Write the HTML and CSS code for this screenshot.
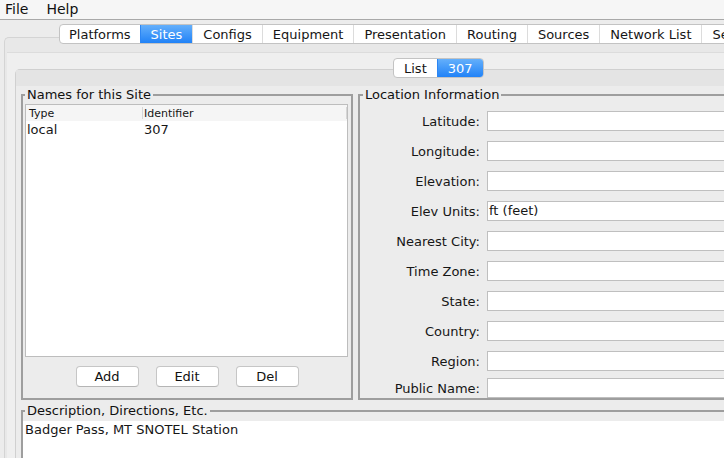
FILE: index.html
```html
<!DOCTYPE html>
<html>
<head>
<meta charset="utf-8">
<link rel="stylesheet" href="styles.css">
</head>
<body>
<div class="menubar"><span>File</span><span>Help</span></div>
<div class="window">
  <div class="tabs">
    <span class="tab">Platforms</span>
    <span class="tab sel">Sites</span>
    <span class="tab">Configs</span>
    <span class="tab">Equipment</span>
    <span class="tab">Presentation</span>
    <span class="tab">Routing</span>
    <span class="tab">Sources</span>
    <span class="tab">Network List</span>
    <span class="tab">Security</span>
  </div>
  <div class="pane">
    <div class="pane-body">
      <div class="subtabs"><span class="tab">List</span><span class="tab sel">307</span></div>
      <div class="subpane">
        <div class="band"></div>
        <div class="groups">
          <fieldset class="group names">
            <legend>Names for this Site</legend>
            <div class="list">
              <div class="list-head"><span class="h1">Type</span><span class="h2">Identifier</span></div>
              <div class="row"><span class="c1">local</span><span class="c2">307</span></div>
            </div>
            <div class="buttons">
              <button class="btn">Add</button>
              <button class="btn">Edit</button>
              <button class="btn">Del</button>
            </div>
          </fieldset>
          <fieldset class="group loc">
            <legend>Location Information</legend>
            <div class="loc-grid">
              <label>Latitude:</label><div class="field"></div>
              <label>Longitude:</label><div class="field"></div>
              <label>Elevation:</label><div class="field"></div>
              <label>Elev Units:</label><div class="field">ft (feet)</div>
              <label>Nearest City:</label><div class="field"></div>
              <label>Time Zone:</label><div class="field"></div>
              <label>State:</label><div class="field"></div>
              <label>Country:</label><div class="field"></div>
              <label>Region:</label><div class="field"></div>
              <label class="tight">Public Name:</label><div class="field tight"></div>
            </div>
          </fieldset>
        </div>
        <fieldset class="group desc">
          <legend>Description, Directions, Etc.</legend>
          <div class="desc-text">Badger Pass, MT SNOTEL Station</div>
        </fieldset>
      </div>
    </div>
  </div>
</div>
</body>
</html>
```

FILE: styles.css
```css
* { box-sizing: border-box; }
html, body { margin: 0; padding: 0; overflow: hidden; }
body {
  width: 724px;
  height: 458px;
  background: #ececec;
  font-family: "DejaVu Sans", "Liberation Sans", sans-serif;
  font-size: 13px;
  color: #161616;
}
.menubar {
  height: 20px;
  background: #f6f6f6;
  border-bottom: 1px solid #a9a9a9;
  display: flex;
  gap: 18px;
  padding-left: 5px;
  font-size: 14px;
  line-height: 19px;
  color: #111;
}
.window {
  width: 900px;
  padding-top: 4px;
}
.tabs, .subtabs {
  display: flex;
  width: max-content;
  height: 20px;
  border: 1px solid #c3c3c3;
  border-radius: 4px;
  background: #fff;
  line-height: 19px;
  position: relative;
  z-index: 1;
  overflow: hidden;
}
.tabs { margin-left: 59px; }
.tab {
  padding: 0 10px;
  border-left: 1px solid #dcdcdc;
  white-space: nowrap;
}
.tabs .tab:first-child { padding: 0 9px; }
.tab:first-child { border-left: none; }
.tab.sel {
  background: linear-gradient(#64affb, #2182f7);
  color: #fff;
  border-left-color: #2d86f3;
}
.pane {
  margin-left: 4px;
  margin-top: -7px;
  border: 1px solid #d4d4d4;
  border-right: none;
  border-radius: 5px 0 0 0;
  background: #e8e8e8;
  padding: 14px 0 0 2px;
}
.pane-body {
  border-top: 1px solid #dcdcdc;
  background: #efefef;
  padding-top: 5px;
}
.subtabs { margin-left: 386px; }
.subpane {
  margin-left: 8px;
  margin-top: -9px;
  border: 1px solid #d0d0d0;
  border-right: none;
  border-radius: 5px 0 0 0;
  background: #ececec;
}
.band {
  height: 16px;
  background: #e4e4e4;
}
.groups {
  display: flex;
  gap: 5px;
  padding-left: 5px;
  margin-top: 1px;
}
.group {
  margin: 0;
  padding: 0;
  min-width: 0;
  border: 2px solid #9e9e9e;
}
.group legend {
  margin-left: 2px;
  padding: 0 2px;
  font-size: 13px;
  line-height: 15px;
  color: #111;
}
.names { width: 332px; flex: none; }
.loc { flex: 1; }
.loc legend { margin-left: 3px; }
.list {
  margin: 2px 3px 0 2px;
  height: 253px;
  border: 1px solid #bdbdbd;
  background: #fff;
}
.list-head {
  display: flex;
  height: 16px;
  background: #f5f5f5;
  font-size: 11px;
  line-height: 16px;
}
.h1 {
  width: 117px;
  padding-left: 3px;
  border-right: 1px solid #d6d6d6;
  margin: 2px 0;
  line-height: 13px;
}
.h2 {
  flex: 1;
  padding-left: 1px;
  border-right: 1px solid #d6d6d6;
  margin: 2px 0;
  line-height: 13px;
}
.row {
  display: flex;
  height: 17px;
  line-height: 17px;
}
.c1 { width: 118px; padding-left: 1px; }
.buttons {
  display: flex;
  justify-content: center;
  gap: 17px;
  margin-top: 9px;
  padding-bottom: 11px;
}
.btn {
  width: 63px;
  height: 21px;
  padding: 0;
  font-family: inherit;
  font-size: 13px;
  color: #111;
  background: #fff;
  border: 1px solid #c6c6c6;
  border-bottom-color: #b5b5b5;
  border-radius: 4px;
  line-height: 19px;
}
.loc-grid {
  display: grid;
  grid-template-columns: 120px 1fr;
  column-gap: 7px;
  row-gap: 10px;
  padding-top: 9px;
  align-items: center;
}
.loc-grid label {
  text-align: right;
  white-space: nowrap;
}
.field {
  height: 20px;
  background: #fff;
  border: 1px solid #bfbfbf;
  padding-left: 1px;
  line-height: 18px;
}
.tight { margin-top: -3px; }
.desc {
  margin: 3px 0 0 5px;
}
.desc-text {
  margin-top: 3px;
  height: 80px;
  background: #fff;
  padding-left: 2px;
  line-height: 17px;
}
```
